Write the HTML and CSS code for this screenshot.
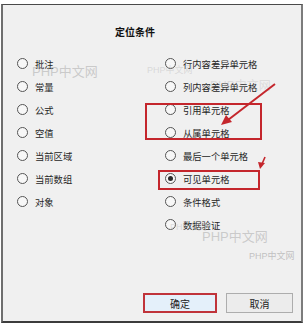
FILE: index.html
```html
<!DOCTYPE html>
<html>
<head>
<meta charset="utf-8">
<link rel="stylesheet" href="styles.css">
</head>
<body>
<div class="dialog">
  <div class="title">定位条件</div>
  <div class="options">
    <div class="col col-left">
      <div class="opt"><span class="radio"></span><span class="lbl">批注</span></div>
      <div class="opt"><span class="radio"></span><span class="lbl">常量</span></div>
      <div class="opt"><span class="radio"></span><span class="lbl">公式</span></div>
      <div class="opt"><span class="radio"></span><span class="lbl">空值</span></div>
      <div class="opt"><span class="radio"></span><span class="lbl">当前区域</span></div>
      <div class="opt"><span class="radio"></span><span class="lbl">当前数组</span></div>
      <div class="opt"><span class="radio"></span><span class="lbl">对象</span></div>
    </div>
    <div class="col col-right">
      <div class="opt"><span class="radio"></span><span class="lbl">行内容差异单元格</span></div>
      <div class="opt"><span class="radio"></span><span class="lbl">列内容差异单元格</span></div>
      <div class="opt"><span class="radio"></span><span class="lbl">引用单元格</span></div>
      <div class="opt"><span class="radio"></span><span class="lbl">从属单元格</span></div>
      <div class="opt"><span class="radio"></span><span class="lbl">最后一个单元格</span></div>
      <div class="opt"><span class="radio checked"></span><span class="lbl">可见单元格</span></div>
      <div class="opt"><span class="radio"></span><span class="lbl">条件格式</span></div>
      <div class="opt"><span class="radio"></span><span class="lbl">数据验证</span></div>
    </div>
  </div>
  <div class="footer">
    <button class="btn btn-ok">确定</button>
    <button class="btn btn-cancel">取消</button>
  </div>
</div>

<span class="wm wm1">PHP中文网</span>
<span class="wm wm2">PHP中文网</span>
<span class="wm wm3">PHP中文网</span>
<span class="wm wm4">PHP中文网</span>
<span class="wm wm5">PHP中文网</span>
<span class="wm wm6">PHP中文</span>

<svg class="annot" width="304" height="328" viewBox="0 0 304 328">
  <rect x="146" y="104" width="115" height="35" fill="none" stroke="#c4262c" stroke-width="2"/>
  <rect x="159" y="171" width="100" height="18" fill="none" stroke="#c4262c" stroke-width="2"/>
  <line x1="275" y1="84" x2="228" y2="120" stroke="#c4262c" stroke-width="2"/>
  <polygon points="221,125 226,115 232,122" fill="#c4262c"/>
  <line x1="265" y1="157" x2="262" y2="164" stroke="#c4262c" stroke-width="1.6"/>
  <polygon points="260,169 258,162 265,163" fill="#c4262c"/>
</svg>
</body>
</html>
```

FILE: styles.css
```css
html, body {
  margin: 0;
  padding: 0;
}
body {
  width: 304px;
  height: 328px;
  background: #ffffff;
  position: relative;
  overflow: hidden;
  font-family: "Noto Sans CJK SC", "Noto Sans", sans-serif;
  color: #222;
}
.dialog {
  box-sizing: border-box;
  margin: 4px 0 0 1px;
  width: 302px;
  height: 319px;
  background: #f0f0f0;
  border-top: 1px solid #4a4a4a;
  border-left: 2px solid #6e6e6e;
  border-right: 2px solid #7c7c7c;
  border-bottom: 2px solid #3c3c3c;
  display: flex;
  flex-direction: column;
}
.title {
  margin-top: 17px;
  height: 20px;
  line-height: 20px;
  padding-left: 112px;
  font-size: 10px;
  font-weight: bold;
  color: #111;
}
.options {
  display: flex;
  margin-top: 10px;
  padding-left: 14px;
}
.col {
  display: flex;
  flex-direction: column;
}
.col-left {
  width: 148px;
}
.opt {
  height: 23px;
  display: flex;
  align-items: center;
}
.radio {
  box-sizing: border-box;
  width: 11px;
  height: 11px;
  border: 1px solid #555;
  border-radius: 50%;
  background: #f7f7f7;
  display: flex;
  align-items: center;
  justify-content: center;
  flex: none;
}
.radio.checked::after {
  content: "";
  width: 5px;
  height: 5px;
  border-radius: 50%;
  background: #2a2a2a;
}
.lbl {
  margin-left: 7px;
  font-size: 9.3px;
  line-height: 12px;
  color: #262626;
}
.footer {
  margin-top: auto;
  display: flex;
  justify-content: flex-end;
  gap: 9px;
  padding: 0 8px 8px 0;
}
.btn {
  box-sizing: border-box;
  height: 20px;
  padding: 0;
  font-family: "Noto Sans CJK SC", "Noto Sans", sans-serif;
  font-size: 10px;
  color: #222;
}
.btn-ok {
  width: 74px;
  border: 2px solid #c0333a;
  background: #e4f0fa;
}
.btn-cancel {
  width: 67px;
  border: 1px solid #adadad;
  background: #ececec;
}
.wm {
  position: absolute;
  white-space: nowrap;
  font-family: "Liberation Sans", "Noto Sans CJK SC", sans-serif;
  pointer-events: none;
}
.wm1 { left: 32px; top: 61px; font-size: 13px; color: rgba(170,170,170,0.55); }
.wm2 { left: 147px; top: 63px; font-size: 9px; color: rgba(170,170,170,0.35); }
.wm3 { left: 210px; top: 76px; font-size: 12px; color: rgba(170,170,170,0.3); }
.wm4 { left: 202px; top: 226px; font-size: 13px; color: rgba(170,170,170,0.55); }
.wm5 { left: 249px; top: 249px; font-size: 9px; color: rgba(160,160,160,0.6); }
.wm6 { left: 170px; top: 220px; font-size: 9px; color: rgba(170,170,170,0.35); }
.annot {
  position: absolute;
  left: 0;
  top: 0;
  pointer-events: none;
}
```
